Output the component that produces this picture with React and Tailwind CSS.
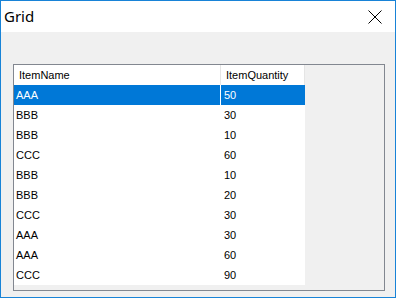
import React from 'react';

const rows = [
  { name: 'AAA', qty: '50' },
  { name: 'BBB', qty: '30' },
  { name: 'BBB', qty: '10' },
  { name: 'CCC', qty: '60' },
  { name: 'BBB', qty: '10' },
  { name: 'BBB', qty: '20' },
  { name: 'CCC', qty: '30' },
  { name: 'AAA', qty: '30' },
  { name: 'AAA', qty: '60' },
  { name: 'CCC', qty: '90' },
];

const App = () => {
  return (
    <div className="w-[396px] h-[298px] box-border border border-[#1883d7] flex flex-col bg-[#f0f0f0] font-['Liberation_Sans',Arial,sans-serif]">
      {/* title bar */}
      <div className="h-[31px] bg-white flex items-center justify-between shrink-0">
        <span className="pl-[3px] text-[15px] text-black font-['Noto_Sans',sans-serif] leading-none">Grid</span>
        <svg width="14" height="14" viewBox="0 0 14 14" className="mr-[13px]" fill="none" stroke="#000" strokeWidth="1">
          <path d="M0.5 0.5L13.5 13.5M13.5 0.5L0.5 13.5" />
        </svg>
      </div>

      <div className="flex-1 pt-[32px] pl-[12px]">
        <div className="w-[372px] h-[227px] border border-[#828790] bg-[#f0f0f0] text-[11px] text-black">
          <div className="flex h-[20px] bg-white w-[291px]">
            <div className="w-[207px] border-r border-[#e5e5e5] pl-[5px] flex items-center">ItemName</div>
            <div className="w-[84px] border-r border-[#e5e5e5] pl-[5px] flex items-center">ItemQuantity</div>
          </div>
          {rows.map((r, i) => {
            const sel = i === 0;
            return (
              <div
                key={i}
                className={`flex h-[20px] w-[291px] ${sel ? 'bg-[#0078d7] text-white' : 'bg-white'}`}
              >
                <div className="w-[207px] border-r border-white pl-[2px] flex items-center">{r.name}</div>
                <div className="w-[84px] pl-[3px] flex items-center">{r.qty}</div>
              </div>
            );
          })}
        </div>
      </div>
    </div>
  );
};

export default App;
